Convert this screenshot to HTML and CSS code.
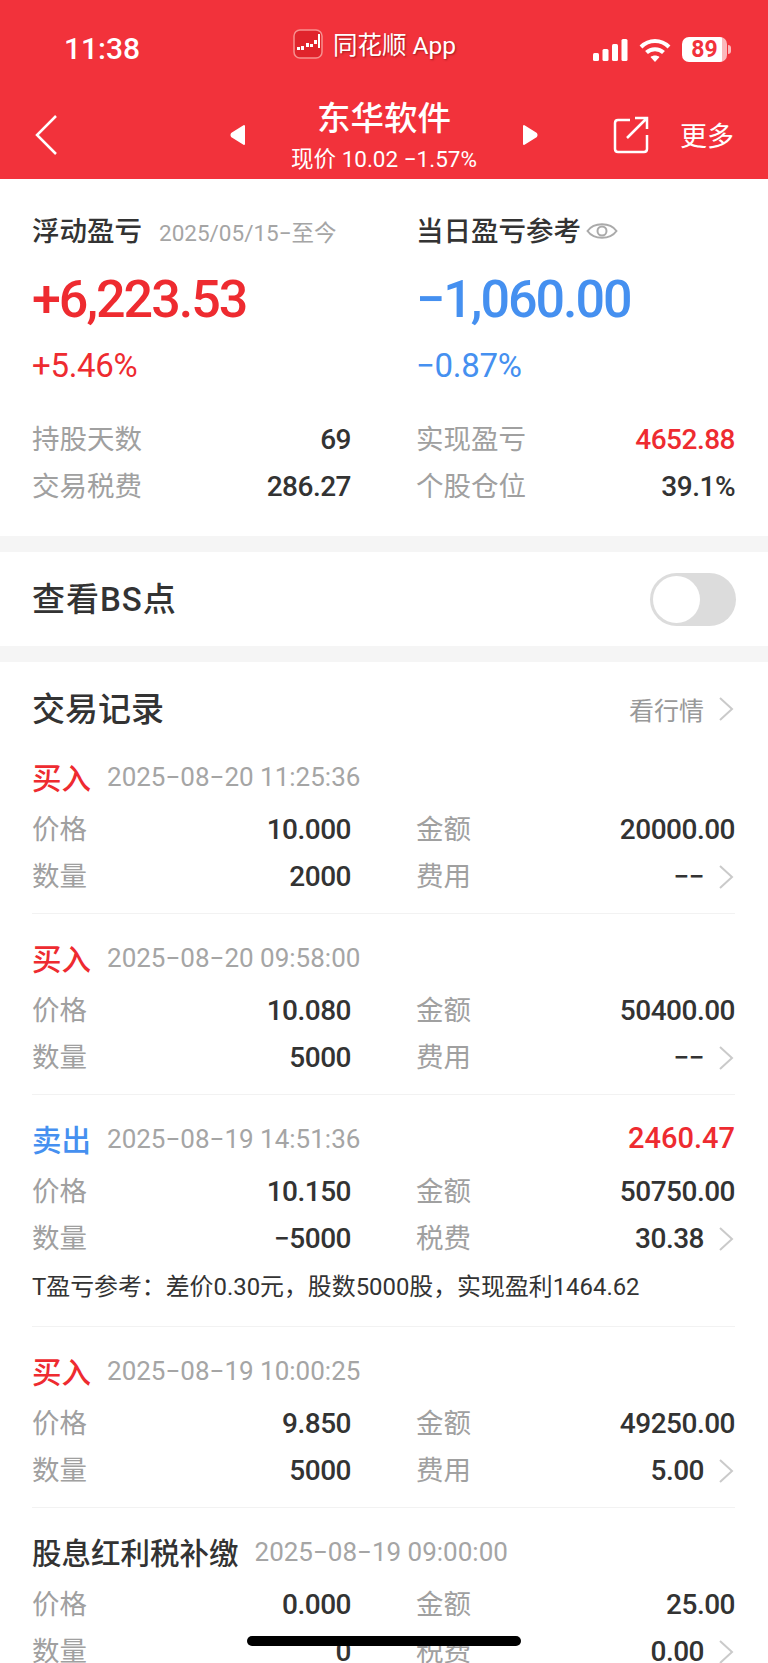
FILE: index.html
```html
<!DOCTYPE html>
<html lang="zh-CN">
<head>
    <meta charset="UTF-8">
    <meta name="viewport" content="width=device-width, initial-scale=1.0">
    <title>东华软件 - 交易记录</title>
    <link rel="stylesheet" href="styles.css">
</head>
<body>
    <svg class="defs" width="0" height="0">
        <symbol id="chevron" viewBox="0 0 16 26">
            <polyline points="2,2 14,13 2,24" fill="none" stroke="#cacaca" stroke-width="2"/>
        </symbol>
    </svg>

    <header class="top">
        <div class="status-bar">
            <div class="clock">11:38</div>
            <div class="app-tag">
                <svg class="app-logo" width="30" height="30" viewBox="0 0 30 30">
                    <rect x="1" y="1" width="28" height="28" rx="6" fill="#e0242c" stroke="#f7908f" stroke-width="1.5"/>
                    <g fill="#fff">
                        <rect x="4" y="18" width="3" height="3"/>
                        <rect x="8" y="17" width="3" height="4"/>
                        <rect x="13" y="14" width="3" height="4"/>
                        <rect x="17" y="15" width="3" height="3"/>
                        <rect x="21" y="11" width="3" height="4"/>
                        <rect x="25" y="5" width="2" height="14"/>
                    </g>
                </svg>
                <span>同花顺 App</span>
            </div>
            <div class="status-icons">
                <svg width="35" height="22" viewBox="0 0 35 22" fill="#fff">
                    <rect x="0" y="14" width="6" height="8" rx="1.5"/>
                    <rect x="9.5" y="10" width="6" height="12" rx="1.5"/>
                    <rect x="19" y="5" width="6" height="17" rx="1.5"/>
                    <rect x="28.5" y="0" width="6" height="22" rx="1.5"/>
                </svg>
                <svg width="32" height="24" viewBox="0 0 32 24" fill="none" stroke="#fff" stroke-width="4">
                    <path d="M2 9 C10 1 22 1 30 9"/>
                    <path d="M7.500 14.500 C12 10 20 10 24.500 14.500"/>
                    <path d="M16 24 L11.500 19 C14 17 18 17 20.500 19 Z" fill="#fff" stroke="none"/>
                </svg>
                <div class="battery"><span>89</span></div>
            </div>
        </div>
        <nav class="nav">
            <svg class="back" width="24" height="42" viewBox="0 0 24 42">
                <polyline points="22,2 3,21 22,40" fill="none" stroke="#fff" stroke-width="2.500"/>
            </svg>
            <div class="stock-switch">
                <svg class="tri" width="16" height="22" viewBox="0 0 16 22"><path d="M14 2 V20 L2 12.500 Q1 11 2 9.500 Z" fill="#fff" stroke="#fff" stroke-width="2" stroke-linejoin="round"/></svg>
                <div class="stock-name">
                    <div class="stock-title">东华软件</div>
                    <div class="stock-price">现价 10.02 −1.57%</div>
                </div>
                <svg class="tri" width="16" height="22" viewBox="0 0 16 22"><path d="M2 2 V20 L14 12.500 Q15 11 14 9.500 Z" fill="#fff" stroke="#fff" stroke-width="2" stroke-linejoin="round"/></svg>
            </div>
            <div class="nav-right">
                <svg width="36" height="38" viewBox="0 0 36 38" fill="none" stroke="#fff" stroke-width="2.500">
                    <path d="M17 4 H5 Q2 4 2 7 V33 Q2 36 5 36 H31 Q34 36 34 33 V19"/>
                    <path d="M14 22 L33 3 M22 2 H34 V13"/>
                </svg>
                <span>更多</span>
            </div>
        </nav>
    </header>

    <section class="summary">
        <div class="summary-cols">
            <div>
                <div class="summary-head"><strong>浮动盈亏</strong><span class="range">2025/05/15−至今</span></div>
                <div class="big up">+6,223.53</div>
                <div class="pct up">+5.46%</div>
            </div>
            <div>
                <div class="summary-head">
                    <strong>当日盈亏参考</strong>
                    <svg class="eye" width="32" height="24" viewBox="0 0 32 24" fill="none" stroke="#aaa" stroke-width="2">
                        <path d="M1.500 12 C8 3 24 3 30.500 12 C24 21 8 21 1.500 12 Z"/>
                        <circle cx="16" cy="12" r="4.500"/>
                    </svg>
                </div>
                <div class="big down">−1,060.00</div>
                <div class="pct down">−0.87%</div>
            </div>
        </div>
        <div class="stats">
            <div class="stat"><span class="label">持股天数</span><span class="value">69</span></div>
            <div class="stat"><span class="label">实现盈亏</span><span class="value up">4652.88</span></div>
            <div class="stat"><span class="label">交易税费</span><span class="value">286.27</span></div>
            <div class="stat"><span class="label">个股仓位</span><span class="value">39.1%</span></div>
        </div>
    </section>

    <section class="bs-row">
        <span class="bs-label">查看BS点</span>
        <div class="toggle"><div class="knob"></div></div>
    </section>

    <section class="records">
        <div class="records-head">
            <h2>交易记录</h2>
            <div class="quote-link">看行情<svg class="chev" width="16" height="26"><use href="#chevron"/></svg></div>
        </div>

        <div class="record">
            <div class="record-head"><span class="type up">买入</span><span class="time">2025−08−20 11:25:36</span></div>
            <div class="stats">
                <div class="stat"><span class="label">价格</span><span class="value">10.000</span></div>
                <div class="stat"><span class="label">金额</span><span class="value">20000.00</span></div>
                <div class="stat"><span class="label">数量</span><span class="value">2000</span></div>
                <div class="stat"><span class="label">费用</span><span class="value">−−<svg class="chev" width="16" height="26"><use href="#chevron"/></svg></span></div>
            </div>
        </div>

        <div class="record">
            <div class="record-head"><span class="type up">买入</span><span class="time">2025−08−20 09:58:00</span></div>
            <div class="stats">
                <div class="stat"><span class="label">价格</span><span class="value">10.080</span></div>
                <div class="stat"><span class="label">金额</span><span class="value">50400.00</span></div>
                <div class="stat"><span class="label">数量</span><span class="value">5000</span></div>
                <div class="stat"><span class="label">费用</span><span class="value">−−<svg class="chev" width="16" height="26"><use href="#chevron"/></svg></span></div>
            </div>
        </div>

        <div class="record">
            <div class="record-head">
                <span class="type down">卖出</span><span class="time">2025−08−19 14:51:36</span>
                <span class="profit up">2460.47</span>
            </div>
            <div class="stats">
                <div class="stat"><span class="label">价格</span><span class="value">10.150</span></div>
                <div class="stat"><span class="label">金额</span><span class="value">50750.00</span></div>
                <div class="stat"><span class="label">数量</span><span class="value">−5000</span></div>
                <div class="stat"><span class="label">税费</span><span class="value">30.38<svg class="chev" width="16" height="26"><use href="#chevron"/></svg></span></div>
            </div>
            <p class="note">T盈亏参考：差价0.30元，股数5000股，实现盈利1464.62</p>
        </div>

        <div class="record">
            <div class="record-head"><span class="type up">买入</span><span class="time">2025−08−19 10:00:25</span></div>
            <div class="stats">
                <div class="stat"><span class="label">价格</span><span class="value">9.850</span></div>
                <div class="stat"><span class="label">金额</span><span class="value">49250.00</span></div>
                <div class="stat"><span class="label">数量</span><span class="value">5000</span></div>
                <div class="stat"><span class="label">费用</span><span class="value">5.00<svg class="chev" width="16" height="26"><use href="#chevron"/></svg></span></div>
            </div>
        </div>

        <div class="record">
            <div class="record-head"><span class="type">股息红利税补缴</span><span class="time">2025−08−19 09:00:00</span></div>
            <div class="stats">
                <div class="stat"><span class="label">价格</span><span class="value">0.000</span></div>
                <div class="stat"><span class="label">金额</span><span class="value">25.00</span></div>
                <div class="stat"><span class="label">数量</span><span class="value">0</span></div>
                <div class="stat"><span class="label">税费</span><span class="value">0.00<svg class="chev" width="16" height="26"><use href="#chevron"/></svg></span></div>
            </div>
        </div>
    </section>

    <div class="home-bar"></div>
</body>
</html>
```

FILE: styles.css
```css
html, body {
    height: 1663px;
    overflow: hidden;
}
body {
    margin: 0;
    background-color: #f5f5f5;
    color: #333;
    font-family: Roboto, "Noto Sans CJK SC", sans-serif;
    position: relative;
}
.defs {
    display: block;
    height: 0;
}
.up {
    color: #ee2b30;
}
.down {
    color: #4590f0;
}

/* red header */
.top {
    background-color: #f2323b;
    color: #fff;
    height: 179px;
}
.status-bar {
    display: grid;
    grid-template-columns: 229px auto 1fr;
    align-items: center;
    height: 90px;
    padding: 0 41px 0 64px;
    box-sizing: border-box;
}
.clock {
    font-size: 30px;
    font-weight: 500;
    margin-top: 6px;
}
.app-tag {
    display: flex;
    align-items: center;
    gap: 10px;
    font-size: 24.500px;
    margin-top: -3px;
    text-shadow: 1px 1px 2px rgba(90, 0, 0, 0.5);
}
.status-icons {
    display: flex;
    align-items: center;
    justify-content: flex-end;
    gap: 11px;
    margin-top: 9px;
}
.battery {
    position: relative;
    width: 45px;
    height: 25px;
    border-radius: 7px;
    background: linear-gradient(to right, #fff 88%, #fbb8bc 88%);
    color: #f2323b;
    font-size: 23px;
    font-weight: 700;
    line-height: 25px;
    text-align: center;
}
.battery::after {
    content: "";
    position: absolute;
    right: -4px;
    top: 8px;
    width: 3px;
    height: 9px;
    border-radius: 0 3px 3px 0;
    background-color: #fbb8bc;
}
.nav {
    display: grid;
    grid-template-columns: 1fr auto 1fr;
    align-items: center;
    height: 89px;
    padding: 0 34px;
    box-sizing: border-box;
}
.stock-switch {
    display: flex;
    align-items: center;
    gap: 45px;
}
.stock-name {
    text-align: center;
}
.stock-title {
    font-size: 33.500px;
    font-weight: 500;
    line-height: 40px;
    margin-top: 1px;
}
.stock-price {
    font-size: 22.500px;
    line-height: 26px;
    margin-top: 7px;
}
.tri {
    margin-top: 1px;
}
.nav-right {
    display: flex;
    align-items: center;
    justify-content: flex-end;
    gap: 31px;
    font-size: 27px;
}

/* summary block */
.summary {
    background-color: #fff;
    padding: 32px 33px 26px 32px;
    height: 357px;
    box-sizing: border-box;
}
.summary-cols {
    display: grid;
    grid-template-columns: 319px 319px;
    column-gap: 65px;
}
.summary-head {
    display: flex;
    align-items: center;
    height: 40px;
    font-size: 27.500px;
}
.summary-head strong {
    font-weight: 500;
    margin-bottom: 4px;
}
.range {
    color: #a5a5a5;
    font-size: 22.500px;
    margin-left: 17px;
}
.eye {
    margin-left: 5px;
}
.big {
    font-size: 52px;
    font-weight: 500;
    letter-spacing: -2px;
    line-height: 60px;
    margin-top: 19px;
}
.pct {
    font-size: 33px;
    letter-spacing: -0.300px;
    line-height: 40px;
    margin-top: 16px;
}
.summary .stats {
    margin-top: 30px;
}
.stats {
    display: grid;
    grid-template-columns: 319px 319px;
    column-gap: 65px;
}
.stat {
    display: flex;
    justify-content: space-between;
    align-items: center;
    height: 47px;
    font-size: 27.500px;
}
.label {
    color: #a0a0a0;
    margin-bottom: 5px;
}
.value {
    display: flex;
    align-items: center;
    font-size: 28px;
    font-weight: 500;
    letter-spacing: -0.500px;
}
.chev {
    margin-left: 14px;
    margin-right: 1px;
}

/* BS toggle */
.bs-row {
    display: flex;
    align-items: center;
    justify-content: space-between;
    height: 94px;
    margin-top: 16px;
    padding: 0 32px;
    box-sizing: border-box;
    background-color: #fff;
    font-size: 33px;
}
.bs-label {
    font-weight: 500;
    letter-spacing: 1px;
    margin-bottom: 4px;
}
.toggle {
    width: 86px;
    height: 53px;
    border-radius: 27px;
    background-color: #dcdcdc;
}
.knob {
    width: 47px;
    height: 47px;
    margin: 3px;
    border-radius: 50%;
    background-color: #fff;
}

/* records list */
.records {
    margin-top: 16px;
    padding: 25px 33px 0 32px;
    background-color: #fff;
}
.records-head {
    display: flex;
    align-items: center;
    justify-content: space-between;
    height: 40px;
    margin-bottom: 6px;
}
.records-head h2 {
    margin: 0;
    font-size: 33px;
    font-weight: 500;
}
.quote-link {
    display: flex;
    align-items: center;
    color: #999;
    font-size: 25px;
    margin-top: 4px;
}
.record {
    padding: 23px 0 13px;
    border-bottom: 1px solid #f2f2f2;
}
.record-head {
    display: flex;
    align-items: center;
    height: 40px;
    margin-bottom: 10px;
}
.type {
    font-size: 29.500px;
    font-weight: 500;
}
.time {
    color: #a5a5a5;
    font-size: 26px;
    margin: 2px 0 0 16px;
}
.profit {
    margin-left: auto;
    font-size: 29px;
    font-weight: 500;
}
.note {
    margin: 7px 0 8px;
    font-size: 23.900px;
    line-height: 36px;
}

.home-bar {
    position: absolute;
    left: 247px;
    top: 1636px;
    width: 274px;
    height: 10px;
    border-radius: 5px;
    background-color: #000;
}
```
